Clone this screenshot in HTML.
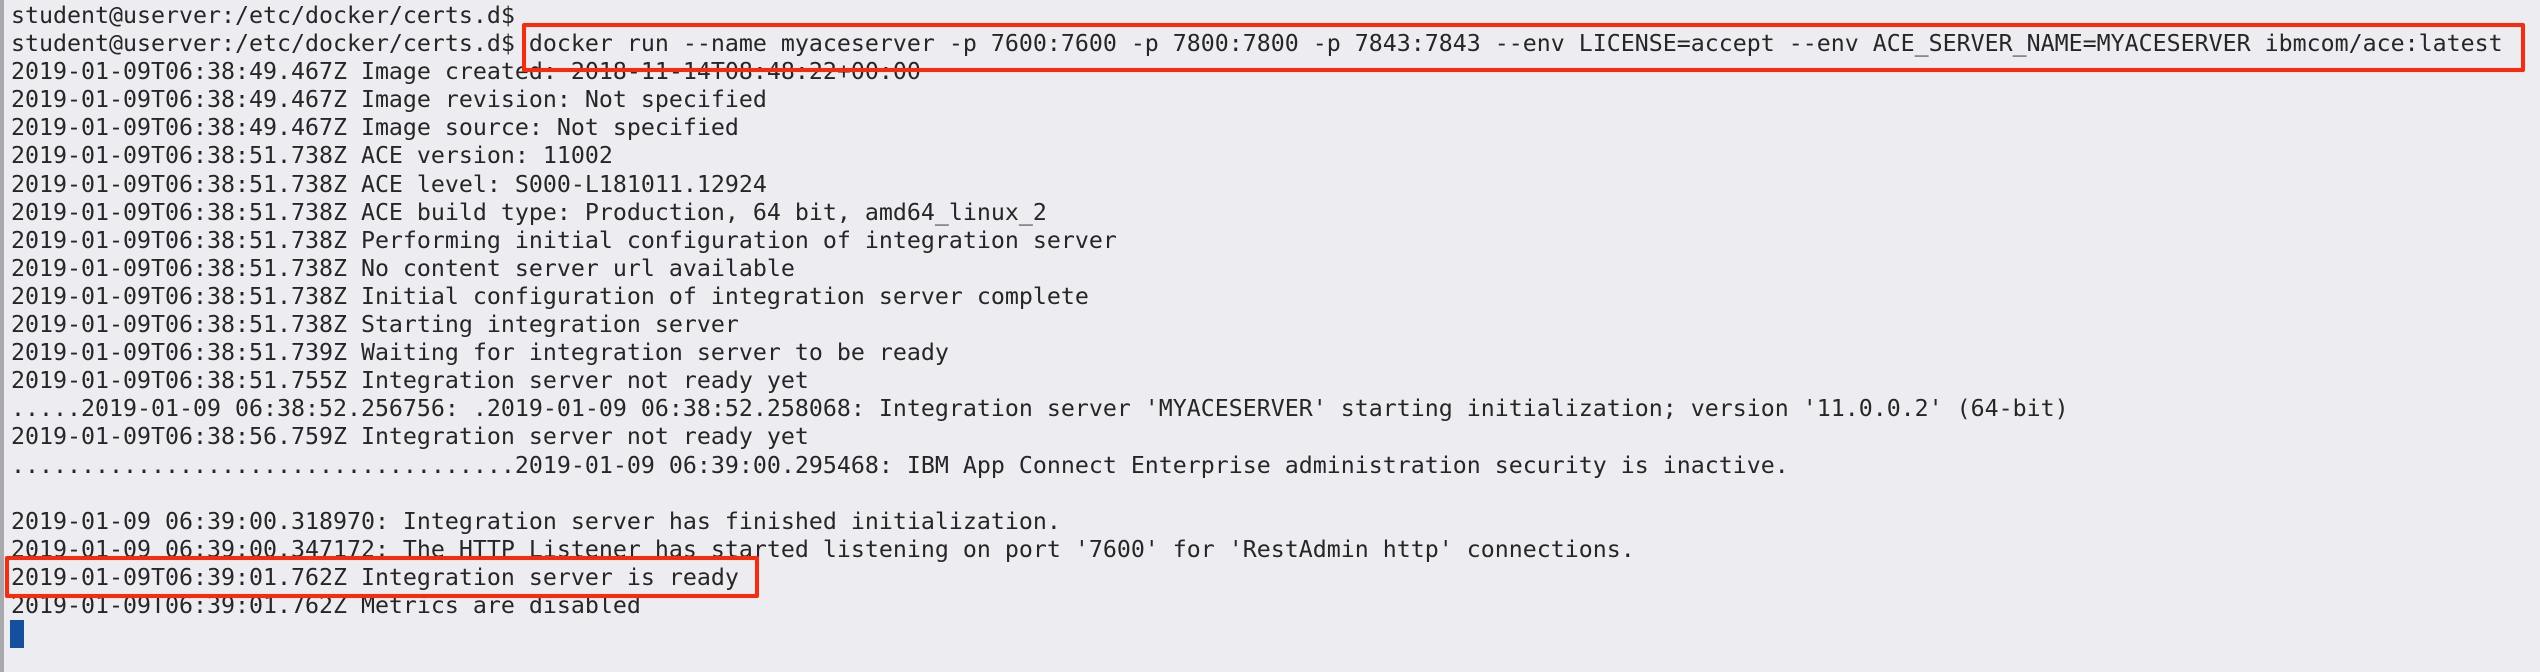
<!DOCTYPE html>
<html><head><meta charset="utf-8"><style>
html,body{margin:0;padding:0}
body{width:2540px;height:672px;background:#ededf1;position:relative;overflow:hidden}
.bl{position:absolute;left:0;top:0;width:4px;height:672px;background:#a9a9ad}
pre{position:absolute;left:11px;top:2px;margin:0;font-family:"DejaVu Sans Mono","Liberation Mono",monospace;font-size:23.25px;line-height:28.1px;color:#262626;white-space:pre}
.box{position:absolute;border:4px solid #fb2a0c;border-radius:2px;box-sizing:border-box}
.cur{position:absolute;left:10px;top:620px;width:14px;height:28px;background:#1550a0}
</style></head><body>
<div class="bl"></div>
<pre>student@userver:/etc/docker/certs.d$
student@userver:/etc/docker/certs.d$ docker run --name myaceserver -p 7600:7600 -p 7800:7800 -p 7843:7843 --env LICENSE=accept --env ACE_SERVER_NAME=MYACESERVER ibmcom/ace:latest
2019-01-09T06:38:49.467Z Image created: 2018-11-14T08:48:22+00:00
2019-01-09T06:38:49.467Z Image revision: Not specified
2019-01-09T06:38:49.467Z Image source: Not specified
2019-01-09T06:38:51.738Z ACE version: 11002
2019-01-09T06:38:51.738Z ACE level: S000-L181011.12924
2019-01-09T06:38:51.738Z ACE build type: Production, 64 bit, amd64_linux_2
2019-01-09T06:38:51.738Z Performing initial configuration of integration server
2019-01-09T06:38:51.738Z No content server url available
2019-01-09T06:38:51.738Z Initial configuration of integration server complete
2019-01-09T06:38:51.738Z Starting integration server
2019-01-09T06:38:51.739Z Waiting for integration server to be ready
2019-01-09T06:38:51.755Z Integration server not ready yet
.....2019-01-09 06:38:52.256756: .2019-01-09 06:38:52.258068: Integration server 'MYACESERVER' starting initialization; version '11.0.0.2' (64-bit)
2019-01-09T06:38:56.759Z Integration server not ready yet
....................................2019-01-09 06:39:00.295468: IBM App Connect Enterprise administration security is inactive.

2019-01-09 06:39:00.318970: Integration server has finished initialization.
2019-01-09 06:39:00.347172: The HTTP Listener has started listening on port '7600' for 'RestAdmin http' connections.
2019-01-09T06:39:01.762Z Integration server is ready
2019-01-09T06:39:01.762Z Metrics are disabled</pre>
<div class="box" style="left:522px;top:23px;width:2003px;height:49px"></div>
<div class="box" style="left:5px;top:556px;width:754px;height:42px"></div>
<div class="cur"></div>
</body></html>
